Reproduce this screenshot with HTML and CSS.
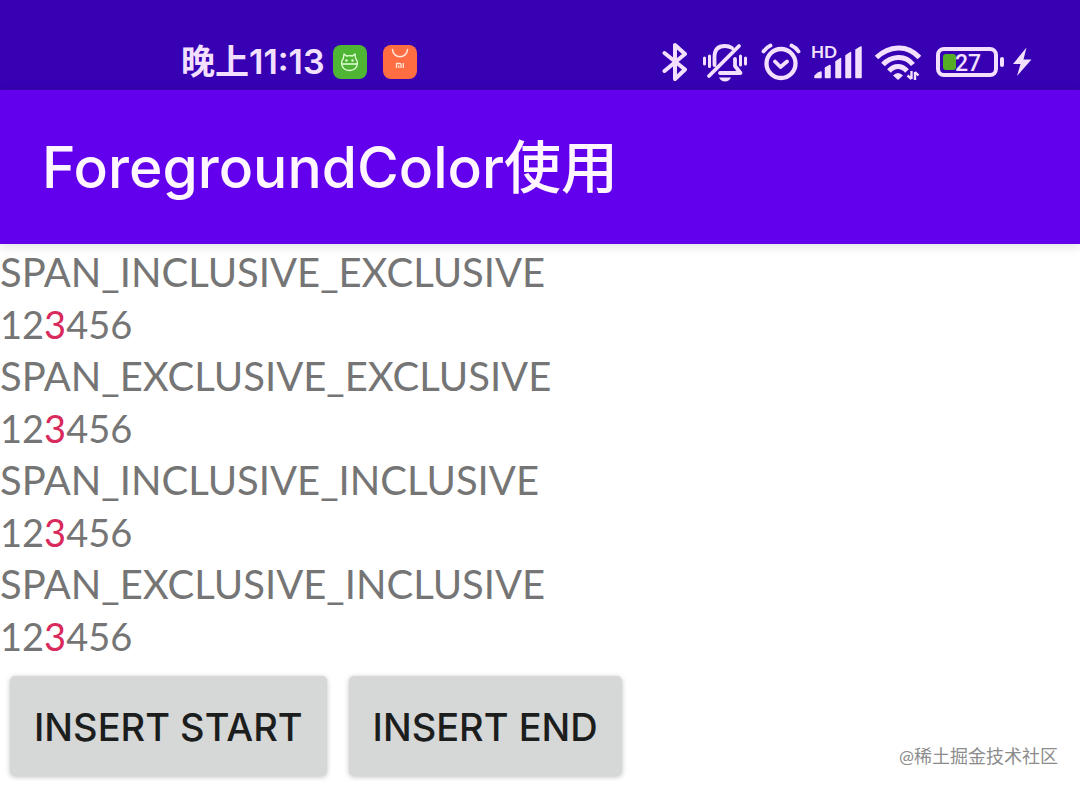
FILE: index.html
```html
<!DOCTYPE html>
<html lang="zh-CN">
<head>
<meta charset="utf-8">
<meta name="viewport" content="width=device-width, initial-scale=1">
<title>ForegroundColor使用</title>
<link rel="stylesheet" href="styles.css">
</head>
<body>
<div class="status-bar">
  <div class="status-left">
    <span class="clock">晚上11:13</span>
    <svg class="app-icon" width="34" height="34" viewBox="0 0 34 34" aria-hidden="true">
      <rect width="34" height="34" rx="8" fill="#4eb535"/>
      <g fill="none" stroke="#e6ffd9" stroke-width="1.3" stroke-linecap="round" stroke-linejoin="round">
        <path d="M10.500 13L11 9L13.500 11Q16.500 10.300 19.500 11L22 9L22.500 13Q24.500 15.500 24.500 18.500Q23.500 25.500 16.500 25.500Q9.500 25.500 8.500 18.500Q8.500 15.500 10.500 13ZM8.500 19H24.500"/>
      </g>
      <circle cx="13.500" cy="15.500" r="1.200" fill="#e6ffd9"/><circle cx="19.500" cy="15.500" r="1.200" fill="#e6ffd9"/>
    </svg>
    <svg class="app-icon" width="34" height="34" viewBox="0 0 34 34" aria-hidden="true">
      <rect width="34" height="34" rx="8" fill="#ff6e42"/>
      <path d="M9.500 4.500C10 14 24 14 24.500 4.500" fill="none" stroke="#ffe6d8" stroke-width="1.500" stroke-linecap="round"/>
      <path d="M13.500 23V18.500H17Q18 18.500 18 19.500V23M15.800 20.500V23M20.300 18V23" fill="none" stroke="#ffe6d8" stroke-width="1.300"/>
    </svg>
  </div>
  <div class="status-right">
    <svg width="26" height="40" viewBox="0 0 26 40" aria-label="Bluetooth">
      <path d="M2.500 11L23 27.500L13 37V3L23 12L2.500 29" fill="none" stroke="#f3e0ff" stroke-width="4" stroke-linecap="round" stroke-linejoin="round"/>
    </svg>
    <svg class="bell" width="46" height="40" viewBox="0 0 46 40" aria-label="Vibrate">
      <g fill="none" stroke="#f3e0ff" stroke-width="3.800" stroke-linecap="round" stroke-linejoin="round">
        <path d="M12.500 23V15C12.500 7 17 4 23 4Q27 4 30 6M33 17V24L38.500 31H18M7 34L37 4"/>
        <path d="M2.500 16V22M7.500 14V24.500M38.500 14V23M43.500 16V22" stroke-width="3"/>
      </g>
      <path d="M17 35.500H29Q27 39.500 23 39.500T17 35.500Z" fill="#f3e0ff"/>
    </svg>
    <svg class="alarm" width="40" height="40" viewBox="0 0 40 40" aria-label="Alarm">
      <g fill="none" stroke="#f3e0ff" stroke-linecap="round" stroke-linejoin="round">
        <circle cx="20" cy="21.500" r="14.500" stroke-width="4.300"/>
        <path d="M2.500 9.500Q5 5.500 9.500 3.500M30.500 3.500Q35 5.500 37.500 9.500M14 19.500L19.500 25L26 19.500" stroke-width="3.800"/>
      </g>
    </svg>
    <svg class="signal" width="50" height="40" viewBox="0 0 50 40" aria-label="HD signal">
      <text class="hd" x="-1" y="16">HD</text>
      <path d="M3 35.500V34Q6 30.500 9 30V35.500ZM13.500 35.500V26L18 23.500V35.500ZM24 35.500V19.500L28.500 16.500V35.500ZM34 35.500V13.500L38.500 10.500V35.500ZM44 35.500V8L49 5V35.500Z" fill="#f3e0ff" stroke="#f3e0ff" stroke-width="1.500" stroke-linejoin="round"/>
    </svg>
    <svg class="wifi" width="46" height="40" viewBox="0 0 46 40" aria-label="Wi-Fi">
      <g fill="none" stroke="#f3e0ff" stroke-width="5">
        <path d="M1.500 15.500Q11 6.500 23 6T44.500 15.500M8 22.500Q14 16 23 15.500T38 22.500M14 29Q18 24.500 23 24.500T32 29"/>
      </g>
      <path d="M18 33.500Q23 28.500 28 33.500L23 38Z" fill="#f3e0ff"/>
      <path d="M36.500 29V37M36.500 37L32.500 33.500M40 38V30M40 30L43.500 33.500" fill="none" stroke="#f3e0ff" stroke-width="2.400"/>
    </svg>
    <svg class="battery" width="68" height="40" viewBox="0 0 68 40" aria-label="Battery 27%">
      <rect x="2" y="7" width="58" height="26" rx="6" fill="none" stroke="#f3e0ff" stroke-width="4"/>
      <rect x="7" y="12" width="13" height="16" rx="3" fill="#55ad25"/>
      <rect x="64" y="15" width="4" height="10" rx="2" fill="#f3e0ff"/>
      <text class="charge" x="19" y="29">27</text>
    </svg>
    <svg width="20" height="40" viewBox="0 0 20 40" aria-label="Charging">
      <path d="M14.500 5.500L1 22H8.500L5 34L19.500 17.500H11.500Z" fill="#f3e0ff"/>
    </svg>
  </div>
</div>
<header class="app-bar"><h1 class="app-title">ForegroundColor使用</h1></header>
<main class="content">
  <p class="line">SPAN_INCLUSIVE_EXCLUSIVE</p>
  <p class="line digits">12<span class="mark">3</span>456</p>
  <p class="line">SPAN_EXCLUSIVE_EXCLUSIVE</p>
  <p class="line digits">12<span class="mark">3</span>456</p>
  <p class="line">SPAN_INCLUSIVE_INCLUSIVE</p>
  <p class="line digits">12<span class="mark">3</span>456</p>
  <p class="line">SPAN_EXCLUSIVE_INCLUSIVE</p>
  <p class="line digits">12<span class="mark">3</span>456</p>
  <div class="footer">
    <div class="actions">
      <button class="btn" type="button">INSERT START</button>
      <button class="btn" type="button">INSERT END</button>
    </div>
    <span class="credit">@稀土掘金技术社区</span>
  </div>
</main>
</body>
</html>
```
FILE: styles.css
```css
* { box-sizing: border-box; }

body {
  margin: 0;
  background: #fff;
  color: #757575;
  font-family: Lato, "Noto Sans CJK SC", sans-serif;
}

.status-bar {
  display: flex;
  justify-content: space-between;
  padding: 42px 48px 8px 181px;
  background: #3700b3;
  color: #f3e0ff;
}

.status-left, .status-right { display: flex; align-items: center; }
.status-right svg { display: block; }

.clock {
  margin-right: 8px;
  font-family: Inter, "Noto Sans CJK SC", sans-serif;
  font-size: 34px;
  font-weight: 600;
  line-height: 40px;
  white-space: nowrap;
}

.app-icon + .app-icon { margin-left: 16px; }

.bell { margin-left: 14px; }
.alarm { margin-left: 13px; }
.signal { margin-left: 11px; }
.wifi { margin-left: 13px; }
.battery { margin-left: 15px; margin-right: 8px; }

.hd { font-size: 17px; font-weight: 700; fill: #f3e0ff; }
.charge { font-family: Roboto, sans-serif; font-size: 23px; font-weight: 500; fill: #f3e0ff; }

.app-bar {
  position: relative;
  padding: 38px 42px 36px;
  background: #6200ee;
  box-shadow: 0 2px 10px rgba(0, 0, 0, 0.14);
}

.app-title {
  margin: 0;
  color: #fff5ff;
  font-family: Inter, "Noto Sans CJK SC", sans-serif;
  font-size: 57px;
  font-weight: 500;
  line-height: 80px;
}

.content { padding-top: 2px; }

.line {
  margin: 0;
  font-size: 40px;
  line-height: 52px;
}

.digits { font-size: 38px; }

.mark { color: #d82a5c; }

.footer {
  display: flex;
  justify-content: space-between;
  align-items: flex-end;
  padding: 14px 22px 12px 10px;
}

.actions { display: flex; gap: 22px; }

.btn {
  padding: 25px 24px 23px;
  border: 0;
  border-radius: 5px;
  background: #d6d7d7;
  box-shadow: 0 1px 5px rgba(0, 0, 0, 0.25);
  color: #1c1d1d;
  font: 500 38px/52px Inter, sans-serif;
  white-space: nowrap;
}

.credit {
  padding-bottom: 8px;
  color: #8c8c8c;
  font-size: 18px;
  line-height: 24px;
}
```
